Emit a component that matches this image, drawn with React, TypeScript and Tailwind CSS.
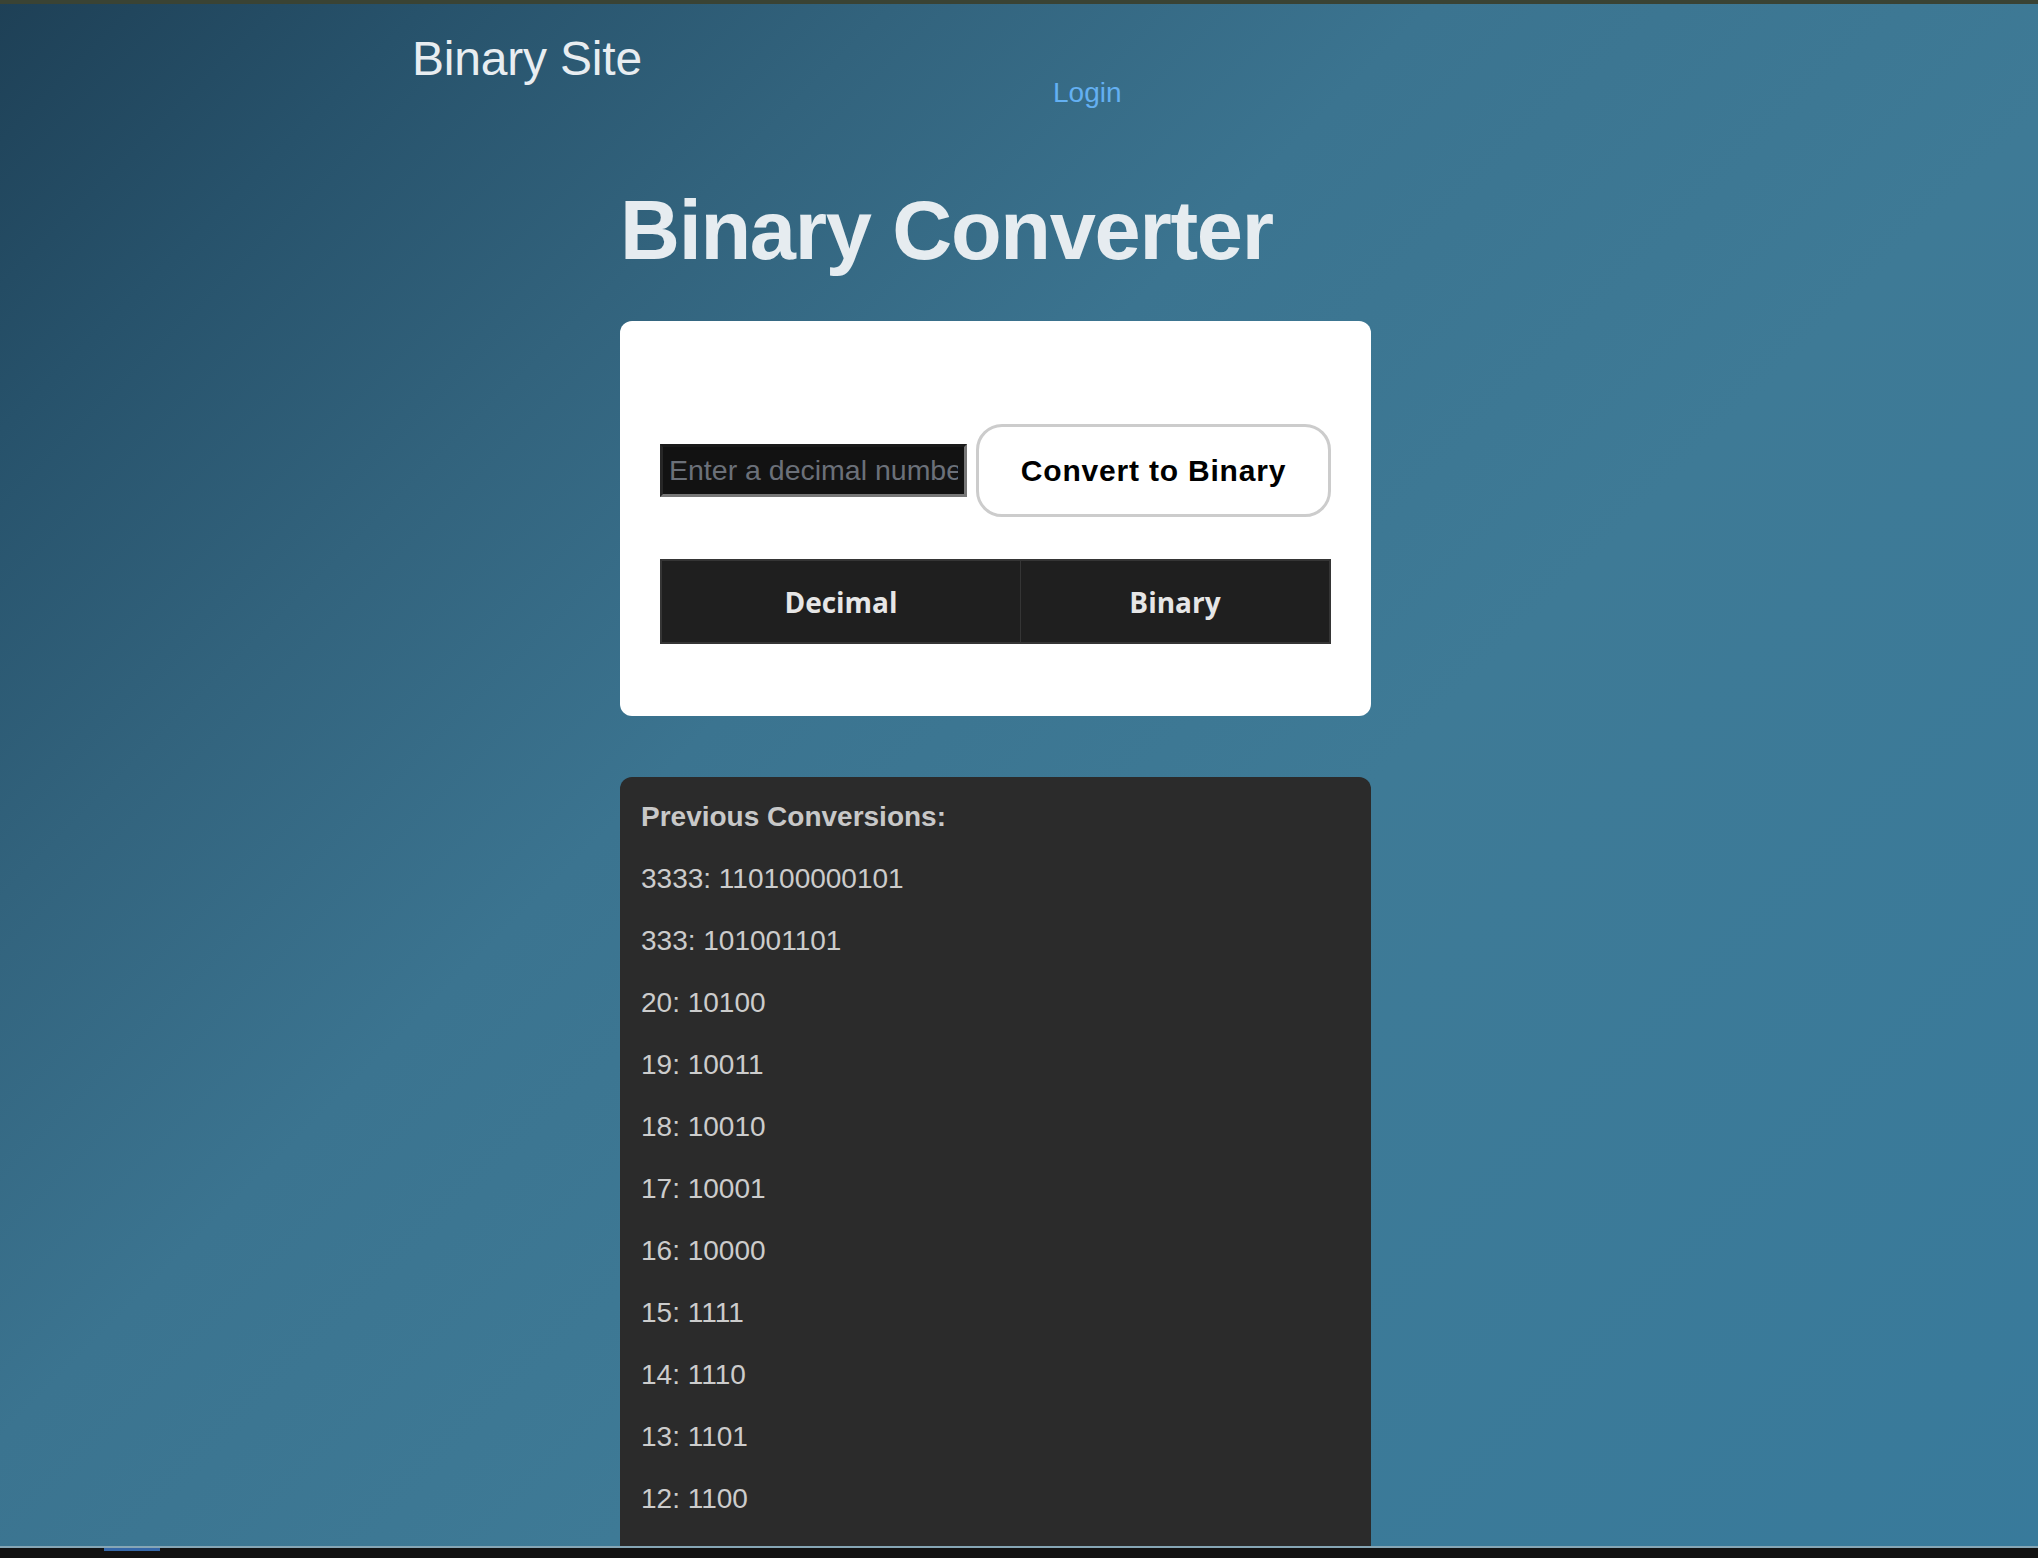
import React from "react";

const rows: [number, string][] = [
  [3333, "110100000101"],
  [333, "101001101"],
  [20, "10100"],
  [19, "10011"],
  [18, "10010"],
  [17, "10001"],
  [16, "10000"],
  [15, "1111"],
  [14, "1110"],
  [13, "1101"],
  [12, "1100"],
];

export default function App() {
  return (
    <div className="relative h-[1558px] w-full overflow-hidden bg-[linear-gradient(135deg,#1e4056_0%,#27526b_12%,#32637d_25%,#3b7490_40%,#3e7a96_60%,#387a9b_100%)] font-['Liberation_Sans',Arial,sans-serif]">
      <div className="h-[4px] bg-[#3a4334]" />
      <header className="flex h-[103px] items-start pl-[412px] pt-[31px]">
        <div className="w-[641px] shrink-0 text-[48px] leading-[48px] tracking-[-0.2px] text-[#e8edf1]">
          Binary Site
        </div>
        <a className="mt-[44px] text-[28px] leading-[28px] text-[#64b0f2]">Login</a>
      </header>

      <main className="flex flex-col pl-[620px] pt-[83px]">
        <h1 className="text-[83px] font-bold leading-[82px] tracking-[-1.3px] text-[#e6ecf0]">
          Binary Converter
        </h1>

        <section className="mt-[49px] h-[395px] w-[751px] rounded-[12px] bg-white px-[40px] pt-[103px]">
          <div className="flex items-center gap-[9px]">
            <input
              type="text"
              placeholder="Enter a decimal number"
              className="h-[53px] w-[307px] border-[3px] border-t-[#1a1a1a] border-l-[#262626] border-b-[#777777] border-r-[#777777] bg-[#121212] px-[6px] text-[28.5px] text-[#dddddd] outline-none placeholder:text-[#6b7079]"
            />
            <button className="h-[93px] w-[355px] rounded-[26px] border-[3px] border-[#cccccc] bg-white text-[30px] font-bold tracking-[0.8px] text-black">
              Convert to Binary
            </button>
          </div>

          <div className="mt-[42px] flex h-[85px] w-[671px] border-2 border-[#353535] bg-[#1f1f1f] font-['Open_Sans',sans-serif] text-[28px] font-bold text-[#e6e6e6]">
            <div className="flex w-[359px] items-center justify-center border-r border-[#353535]">
              Decimal
            </div>
            <div className="flex flex-1 items-center justify-center">Binary</div>
          </div>
        </section>

        <section className="mt-[61px] h-[900px] w-[751px] rounded-t-[12px] bg-[#2b2b2b] pl-[21px] pt-[24px] text-[28px] leading-[32px] text-[#cccccc]">
          <div className="mb-[30px] font-bold text-[#c8c8c8]">Previous Conversions:</div>
          {rows.map(([d, b]) => (
            <div key={d} className="mb-[30px]">
              {d}: {b}
            </div>
          ))}
        </section>
      </main>

      <div className="absolute bottom-0 left-0 h-[12px] w-full border-t-2 border-[#86a6b5] bg-[#121212]">
        <div className="ml-[104px] h-[3px] w-[56px] bg-[#3567a8]" />
      </div>
    </div>
  );
}
